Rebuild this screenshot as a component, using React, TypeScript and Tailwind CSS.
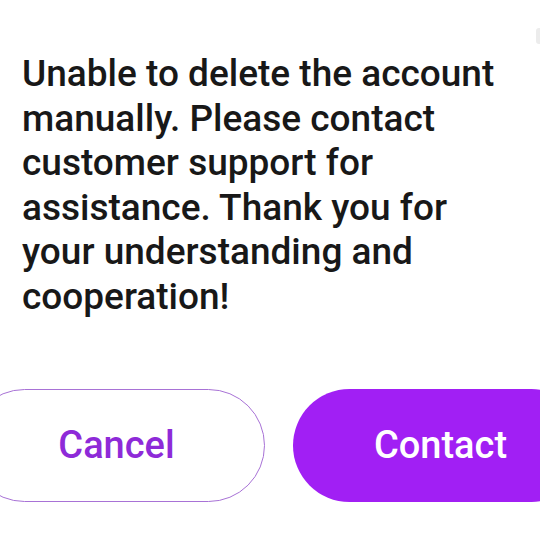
export default function App() {
  return (
    <div
      className="relative w-[540px] h-[540px] overflow-hidden bg-white"
      style={{ fontFamily: "Roboto, 'Noto Sans', sans-serif" }}
    >
      <div className="absolute left-[536px] top-[28px] w-[6px] h-[16px] rounded-full bg-[#ececec]" />
      <p className="pt-[52px] pl-[22px] pr-[20px] text-[37px] leading-[44.5px] text-[#181818] font-medium">
        Unable to delete the account manually. Please contact customer support for assistance. Thank you for your understanding and cooperation!
      </p>
      <div className="mt-[70px] ml-[-32px] w-[620px] flex gap-[28px]">
        <button className="flex-1 h-[113px] rounded-full border-[1.5px] border-[#a872d6] bg-white text-[#8e2ad8] text-[38px] font-medium flex items-center justify-center">
          Cancel
        </button>
        <button className="flex-1 h-[113px] rounded-full bg-[#a11ff4] text-white text-[38px] font-medium flex items-center justify-center">
          Contact
        </button>
      </div>
    </div>
  );
}
